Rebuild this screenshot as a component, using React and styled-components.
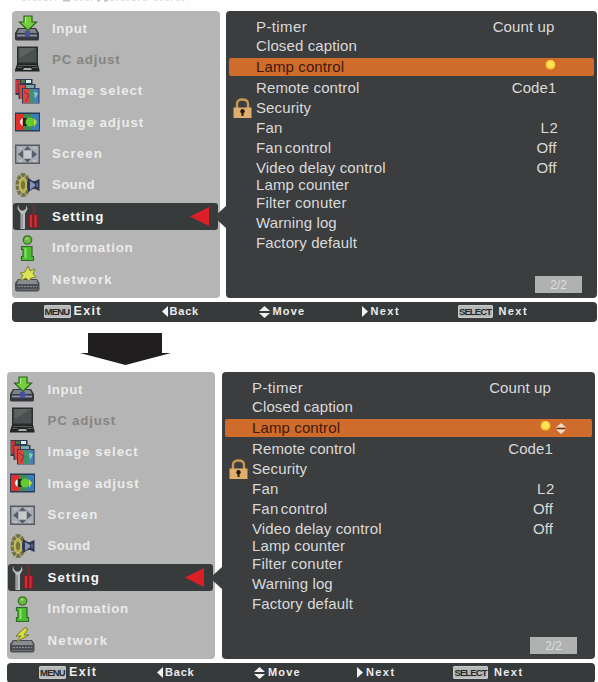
import React from 'react';
import styled, { createGlobalStyle } from 'styled-components';

const Global = createGlobalStyle`
  * { box-sizing: border-box; }
  body { margin: 0; background: #fefefe; overflow: hidden; }
`;

const Page = styled.main`
  width: 598px;
  height: 682px;
  overflow: hidden;
  display: flex;
  flex-direction: column;
  font-family: "Liberation Sans", Arial, sans-serif;
`;
const Caption = styled.header`
  height: 11px;
  padding-left: 20px;
  flex: none;
  svg { display: block; }
`;
const Screen = styled.section`
  flex: none;
  display: flex;
  flex-direction: column;
  gap: 4px;
  margin-left: ${p => p.$left}px;
  width: ${p => p.$width}px;
`;
const Body = styled.div`
  display: flex;
  height: 287px;
  justify-content: space-between;
`;
const Sidebar = styled.nav`
  width: 208px;
  background: #b5b5b5;
  border-radius: 4px;
  padding-top: 1.5px;
`;
const MenuItem = styled.div`
  height: 31.4px;
  padding: 2px 2px 2.4px 1px;
  display: flex;
`;
const MenuFill = styled.div`
  flex: 1;
  display: flex;
  align-items: center;
  padding-left: 2px;
  padding-right: 8px;
  border-radius: 3px;
  background: ${p => (p.$on ? '#383b3c' : 'transparent')};
  svg { flex: none; display: block; }
`;
const MenuLabel = styled.span`
  flex: 1;
  margin-left: 12.5px;
  padding-top: 1px;
  font-weight: bold;
  font-size: 13.3px;
  line-height: 16px;
  white-space: nowrap;
  letter-spacing: ${p => p.$track}px;
  color: ${p => (p.$dim ? '#858585' : p.$on ? '#f6f6f6' : '#ebebeb')};
`;
const Panel = styled.div`
  position: relative;
  width: ${p => p.$width}px;
  padding-top: 7px;
  background: #3b3d3f;
  border-radius: 4px;
  display: flex;
  flex-direction: column;
`;
const Notch = styled.svg`
  position: absolute;
  left: -12px;
  top: 195px;
`;
const Row = styled.div`
  height: ${p => p.$h}px;
  margin: ${p => (p.$on ? '3px 3px 2px' : '0 3px')};
  padding-left: 4px;
  padding-right: ${p => p.$end}px;
  flex: none;
  display: flex;
  align-items: center;
  font-size: 15px;
  line-height: 18px;
  letter-spacing: 0.12px;
  white-space: nowrap;
  color: ${p => (p.$on ? '#401a0d' : '#dadada')};
  background: ${p => (p.$on ? '#cf6b2b' : 'transparent')};
  border-radius: 2px;
`;
const Lead = styled.span`
  width: 23px;
  flex: none;
  svg { display: block; }
`;
const Name = styled.span`
  flex: 1;
  word-spacing: ${p => p.$word || 0}px;
  letter-spacing: ${p => p.$track || 0.12}px;
`;
const Value = styled.span`
  display: flex;
  align-items: center;
  gap: 5px;
  letter-spacing: ${p => p.$track || 0.12}px;
`;
const PageBadge = styled.div`
  margin: auto ${p => p.$end}px 5px auto;
  width: 47px;
  height: 17px;
  background: #b0b1b1;
  color: #dedede;
  font-size: 12px;
  line-height: 18px;
  padding-left: 1px;
  text-align: center;
`;
const Footer = styled.footer`
  height: 19.5px;
  border-radius: 4px;
  background: #363a3b;
  color: #ececec;
  padding-left: 32px;
  display: grid;
  grid-template-columns: 118px 97px 103px 96px 1fr;
  align-items: center;
`;
const Hint = styled.div`
  display: flex;
  align-items: center;
  gap: ${p => p.$gap}px;
  font-weight: bold;
  font-size: ${p => p.$size || 11}px;
  line-height: 15px;
  letter-spacing: ${p => p.$track}px;
  svg { display: block; }
`;
const Key = styled.span`
  width: ${p => p.$w}px;
  height: 13px;
  border-radius: 2px;
  background: #b7b9b9;
  color: #242728;
  font-size: ${p => p.$font}px;
  line-height: 13px;
  letter-spacing: ${p => p.$track}px;
  text-align: center;
  box-shadow: inset 0 0 0 1px #c9caca;
`;
const DownArrow = styled.svg`
  display: block;
  flex: none;
  margin: 11.5px 0 7px 80px;
`;

const Icon = ({ children }) => (
  <svg width="25" height="26" viewBox="0 0 25 26">{children}</svg>
);

const InputIcon = () => (
  <Icon>
    <path d="M3 13h18l3 5v6q0 1.500-2 1.500H2Q0 25.500 0 24v-6z" fill="#34373d" />
    <path d="M4 14h16l2 4H2z" fill="#7d838e" />
    <path d="M2 19.500h20v2H2z" fill="#8a8fa5" />
    <path d="M10 16h5v6h-5z" fill="#4850a0" />
    <path d="M9 1h8v6h4.500L13 15.500 4.500 7H9z" fill="#75cf3d" stroke="#29651f" strokeWidth="1.200" />
    <path d="M10.500 2v6" stroke="#b6ef7c" />
  </Icon>
);
const LaptopIcon = () => (
  <Icon>
    <path d="M2 .5h21V18H2z" fill="#282e2e" />
    <path d="M3.500 2h18v14.500h-18z" fill="#4b5150" />
    <path d="M4 2h17L5 12z" fill="#5b6260" />
    <path d="M2 18h21l1.500 6v1.500H0V24z" fill="#202425" />
    <path d="M3 19.500h19M2.500 21.500h5M17 21.500h6" stroke="#585c5b" />
    <path d="M9 22h7l1 2H8z" fill="#aaa" />
  </Icon>
);
const SelectIcon = () => (
  <Icon>
    <path d="M.5 1h17v16h-17z" fill="#303a49" />
    <path d="M1 2h4v13H1z" fill="#c93536" />
    <path d="M6 2h4v3H6z" fill="#42774a" /><path d="M11 2h5v3h-5z" fill="#d6edf0" />
    <path d="M3.500 6h17v15h-17z" fill="#303d58" />
    <path d="M4 7h6v14H5z" fill="#d8433e" />
    <path d="M11 7h8v3h-8z" fill="#79aaaa" />
    <path d="M7 10h17.500v15.500H7z" fill="#33405b" />
    <path d="M8 11h6v14H8z" fill="#d9463f" />
    <path d="M14 11h5v14h-5z" fill="#3d9272" />
    <path d="M19 11h4.500v14H19z" fill="#4980b8" />
    <path d="M9 14l5 3-3 6" fill="none" stroke="#8f2632" />
    <path d="M19 14l4 1-3 6z" fill="#8ac7cc" />
  </Icon>
);
const AdjustIcon = () => (
  <Icon>
    <path d="M0 3.500h25v19H0z" fill="#293a59" />
    <path d="M1 5h8v16H1z" fill="#df302b" />
    <path d="M9 5h8v16H9z" fill="#3f8a50" />
    <path d="M17 5h7v16h-7z" fill="#397eb4" />
    <path d="M7.500 9q-5 4 0 8z" fill="#fff" />
    <path d="M8 9h4v8H8z" fill="#172820" />
    <circle cx="15" cy="13" r="4.500" fill="#62cb2e" />
    <path d="M19 9l3 4-3 5z" fill="#c3d443" />
  </Icon>
);
const ScreenIcon = () => (
  <Icon>
    <path d="M.7 4.200h23.600v18H.7z" fill="#a8acb2" stroke="#555b63" strokeWidth="1.400" />
    <path d="M9 10h7v7H9z" fill="#c7cacd" />
    <path d="M9 9l3.500-4L16 9zM9 18l3.500 3.500L16 18zM3 13.200l5-4v8zM22 13.200l-5-4v8z" fill="#545e6c" />
    <path d="M4 7h3M18 7h3M4 20h3M18 20h3" stroke="#d2d4d4" />
  </Icon>
);
const SoundIcon = () => (
  <Icon>
    <ellipse cx="8" cy="13" rx="5.500" ry="10" fill="none" stroke="#76733f" strokeWidth="4" strokeDasharray="4 1" />
    <ellipse cx="8" cy="13" rx="3.500" ry="7" fill="#aaa64f" stroke="#c4bd58" strokeWidth="1.500" />
    <ellipse cx="8" cy="13" rx="2" ry="4" fill="#77743d" />
    <path d="M13 6l5 3h2l4.500-2v12L20 17h-2l-5 3-1-5v-4z" fill="#303852" />
    <path d="M15 9v9l5-4v-2z" fill="#8792b9" />
    <path d="M21 11h2v4h-2z" fill="#565f82" />
  </Icon>
);
const ToolsIcon = () => (
  <Icon>
    <path d="M3 1.500l1 4 2 2h3l2-2 .5-3.500 1 4-2.500 4.500V26H5.500V10L2.500 6z" fill="#bbbdc0" />
    <path d="M7 11v14" stroke="#77797b" />
    <path d="M18.500 1v11" stroke="#7f2929" strokeWidth="1.500" />
    <path d="M14.500 11h8l1 3v9l-2 2h-6l-2-2v-9z" fill="#861d24" />
    <path d="M16 12v12M20.500 12v12" stroke="#cf3039" strokeWidth="2" />
  </Icon>
);
const InfoIcon = () => (
  <Icon>
    <circle cx="12.500" cy="5" r="4.200" fill="#69b842" stroke="#397525" strokeWidth="1.300" />
    <circle cx="12" cy="3.500" r="1.500" fill="#8fd565" />
    <path d="M7.500 11.500H17v10h1.500v4h-12v-4H8v-7H6.500v-3z" fill="#4dbd30" stroke="#2d6a27" strokeWidth="1.200" />
    <path d="M10.500 13v10" stroke="#89e463" strokeWidth="2" />
  </Icon>
);
const NetworkIcon = ({ bolt }) => (
  <Icon>
    <path d="M3 13h19l2.500 4v7l-1.500 1.500H1.500L0 24v-7z" fill="#4c4f55" />
    <path d="M3.500 14h18l1.500 4H2z" fill="#888c90" />
    <path d="M3 20.500h19" stroke="#8c9096" strokeDasharray="2 1" />
    <path d="M2 23.500h21" stroke="#686b72" />
    {bolt ? (
      <path d="M15 .5L6 9h5l-5 6 13-7h-5l4-6z" fill="#d8df3d" stroke="#76792b" />
    ) : (
      <path d="M13 0l2 5 5-2-2 5 3 3-5 1-2 3-3-3-6 3 3-6-3-2 5-1z" fill="#dce453" stroke="#7d8337" />
    )}
  </Icon>
);
const RedArrow = () => (
  <svg width="20" height="19" viewBox="0 0 20 19"><path d="M0 9.500L19 0v19z" fill="#dc1f26" /></svg>
);
const Lock = () => (
  <svg width="19" height="20" viewBox="0 0 19 20">
    <path d="M4 10V6q0-4.500 5.500-4.500T15 6v4" fill="none" stroke="#c9974f" strokeWidth="2.400" />
    <path d="M.5 9.500h18V20H.5z" fill="#e0ae6c" />
    <circle cx="9.500" cy="13.300" r="2.200" fill="#241913" />
    <path d="M8.500 14h2v4h-2z" fill="#241913" />
  </svg>
);
const Lamp = () => (
  <svg width="11" height="16" viewBox="0 0 11 16">
    <circle cx="5.500" cy="5.700" r="4.900" fill="#f8c331" />
    <circle cx="5.500" cy="5.300" r="3.500" fill="#fbe357" />
  </svg>
);
const Spinner = () => (
  <svg width="10" height="11" viewBox="0 0 10 11">
    <path d="M0 4.500L5 0l5 4.500zM0 6.500h10L5 11z" fill="#e9dccb" />
    <path d="M1 5.500h8" stroke="#66331d" />
  </svg>
);
const UpDown = () => (
  <svg width="11" height="12" viewBox="0 0 11 12"><path d="M0 5l5.500-5L11 5zM0 7h11l-5.500 5z" fill="#f1f1f1" /></svg>
);
const Side = ({ right }) => (
  <svg width="6" height="11" viewBox="0 0 6 11">
    <path d={right ? 'M0 0l6 5.500L0 11z' : 'M6 0L0 5.500 6 11z'} fill="#f1f1f1" />
  </svg>
);

const menu = [
  ['Input', InputIcon, 0.6],
  ['PC adjust', LaptopIcon, 0.8],
  ['Image select', SelectIcon, 0.95],
  ['Image adjust', AdjustIcon, 0.9],
  ['Screen', ScreenIcon, 1.1],
  ['Sound', SoundIcon, 0.3],
  ['Setting', ToolsIcon, 1.05],
  ['Information', InfoIcon, 0.75],
  ['Network', NetworkIcon, 1.2],
];

const settings = [
  { name: 'P-timer', h: 18, value: 'Count up', end: 39.5, track: 0.4 },
  { name: 'Closed caption', h: 19 },
  { name: 'Lamp control', h: 18, on: true },
  { name: 'Remote control', h: 20, value: 'Code1', end: 37.5 },
  { name: 'Security', h: 20, lock: true },
  { name: 'Fan', h: 20, value: 'L2', end: 35.5, track: 0.3, valueTrack: 0.6 },
  { name: 'Fan control', h: 20, value: 'Off', end: 37.5, word: -2, track: 0.2 },
  { name: 'Video delay control', h: 19, value: 'Off', end: 37.5 },
  { name: 'Lamp counter', h: 16 },
  { name: 'Filter conuter', h: 20, track: 0.22 },
  { name: 'Warning log', h: 20 },
  { name: 'Factory default', h: 19 },
];

function ProjectorMenu({ left, width, panelWidth, adjusting }) {
  const inset = adjusting ? 1.5 : 0;
  return (
    <Screen $left={left} $width={width}>
      <Body>
        <Sidebar>
          {menu.map(([name, Glyph, track]) => {
            const on = name === 'Setting';
            return (
              <MenuItem key={name}>
                <MenuFill $on={on}>
                  <Glyph bolt={adjusting} />
                  <MenuLabel $track={track} $on={on} $dim={name === 'PC adjust'}>{name}</MenuLabel>
                  {on && <RedArrow />}
                </MenuFill>
              </MenuItem>
            );
          })}
        </Sidebar>
        <Panel $width={panelWidth}>
          <Notch width="13" height="22" viewBox="0 0 13 22"><path d="M0 11L12 0h1v22h-1z" fill="#3b3d3f" /></Notch>
          {settings.map(s => (
            <Row key={s.name} $h={s.h} $on={s.on} $end={s.on ? (adjusting ? 26 : 38) : (s.end || 0) + inset}>
              <Lead>{s.lock && <Lock />}</Lead>
              <Name $word={s.word} $track={s.track}>{s.name}</Name>
              <Value $track={s.valueTrack}>
                {s.on ? <><Lamp />{adjusting && <Spinner />}</> : s.value}
              </Value>
            </Row>
          ))}
          <PageBadge $end={adjusting ? 18.5 : 15.5}>2/2</PageBadge>
        </Panel>
      </Body>
      <Footer>
        <Hint $gap={3} $size={12.5} $track={1.3}><Key $w={27} $font={9.5} $track={-0.8}>MENU</Key>Exit</Hint>
        <Hint $gap={2} $track={0.8}><Side />Back</Hint>
        <Hint $gap={3} $track={1.2}><UpDown />Move</Hint>
        <Hint $gap={3} $track={1.4}><Side right />Next</Hint>
        <Hint $gap={6} $track={1.4}><Key $w={35} $font={9.5} $track={-0.9}>SELECT</Key>Next</Hint>
      </Footer>
    </Screen>
  );
}

export default function App() {
  return (
    <>
      <Global />
      <Page>
        <Caption>
          <svg width="172" height="3" viewBox="0 0 172 3">
            <path d="M2 .3h34M54 .3h22M90 .3h38M134 .3h34" stroke="#dedede" strokeDasharray="4 2 2 3" />
            <path d="M43 .6h7M77 .6h3M84 .6h4" stroke="#c4c4c4" strokeWidth="1.600" />
          </svg>
        </Caption>
        <ProjectorMenu left={11.5} width={585.5} panelWidth={371} />
        <DownArrow width="91" height="32" viewBox="0 0 91 32">
          <path d="M8 0h74v20h9L45.500 32 0 20h8z" fill="#201e1f" />
        </DownArrow>
        <ProjectorMenu left={7} width={588} panelWidth={373} adjusting />
      </Page>
    </>
  );
}
